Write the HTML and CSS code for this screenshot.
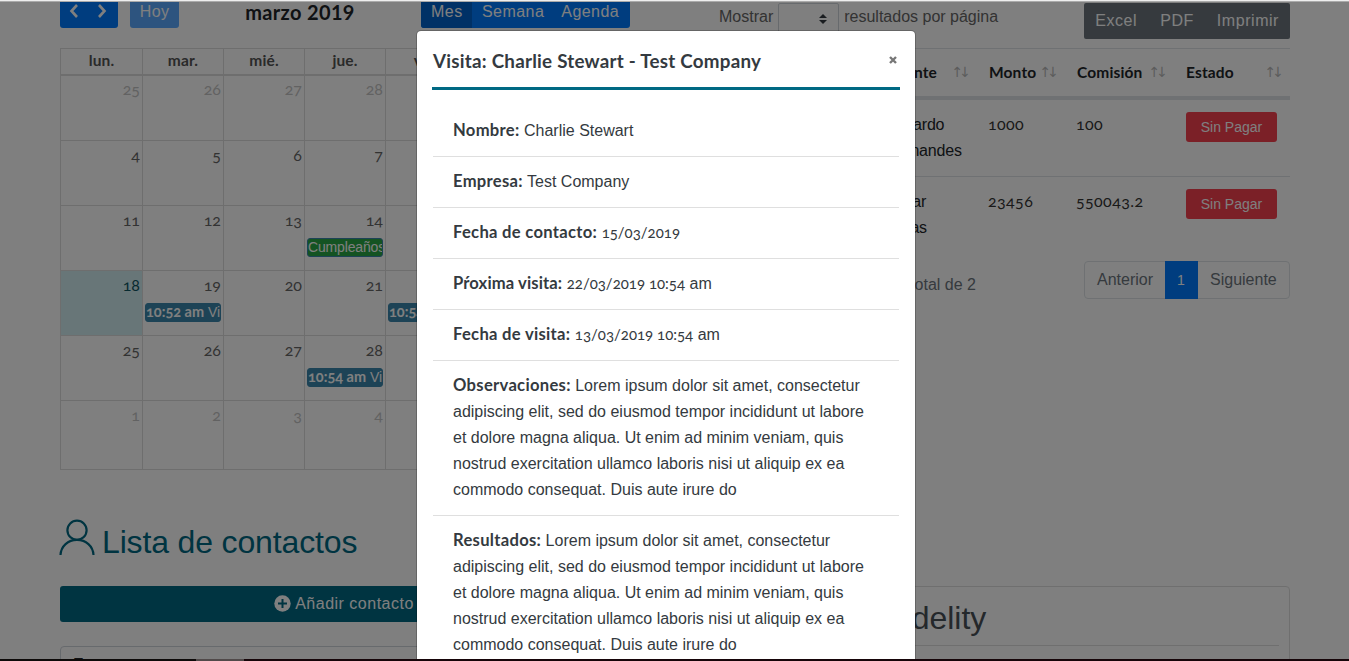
FILE: index.html
```html
<!DOCTYPE html>
<html lang="es">
<head>
<meta charset="utf-8">
<title>Panel de visitas</title>
<link rel="stylesheet" href="styles.css">
</head>
<body>
<div class="page">
  <main class="columns">
    <section class="left">
      <div class="toolbar">
        <div class="nav-group">
          <svg width="12" height="18" viewBox="0 0 12 18"><path d="M9 3 3.5 9 9 15" /></svg>
          <svg width="12" height="18" viewBox="0 0 12 18"><path d="M3 3 8.5 9 3 15" /></svg>
        </div>
        <button class="today-btn">Hoy</button>
        <h2 class="month">marzo 2019</h2>
        <div class="views"><span class="view active">Mes</span><span class="view semana">Semana</span><span class="view">Agenda</span></div>
      </div>
      <div class="calendar">
        <div class="week names"><span>lun.</span><span>mar.</span><span>mié.</span><span>jue.</span><span>vie.</span><span>sáb.</span><span>dom.</span></div>
        <div class="week"><div class="day out">25</div><div class="day out">26</div><div class="day out">27</div><div class="day out">28</div><div class="day"></div><div class="day"></div><div class="day"></div></div>
        <div class="week"><div class="day">4</div><div class="day">5</div><div class="day">6</div><div class="day">7</div><div class="day"></div><div class="day"></div><div class="day"></div></div>
        <div class="week"><div class="day">11</div><div class="day">12</div><div class="day">13</div><div class="day">14<div class="event birthday">Cumpleaños</div></div><div class="day"></div><div class="day"></div><div class="day"></div></div>
        <div class="week"><div class="day now">18</div><div class="day">19<div class="event"><b>10:52 am</b> Visita</div></div><div class="day">20</div><div class="day">21</div><div class="day">22<div class="event"><b>10:54 am</b> Visita</div></div><div class="day"></div><div class="day"></div></div>
        <div class="week"><div class="day">25</div><div class="day">26</div><div class="day">27</div><div class="day">28<div class="event"><b>10:54 am</b> Visita</div></div><div class="day"></div><div class="day"></div><div class="day"></div></div>
        <div class="week last"><div class="day out">1</div><div class="day out">2</div><div class="day out">3</div><div class="day out">4</div><div class="day"></div><div class="day"></div><div class="day"></div></div>
      </div>
      <h1 class="contacts-title">
        <svg width="37" height="37" viewBox="0 0 37 37"><circle cx="18" cy="11.300" r="9.600" /><path d="M1.500 36C2 27 9 20.900 18 20.900S34 27 34.500 36" /></svg>
        <span>Lista de contactos</span>
      </h1>
      <button class="add-btn">
        <svg width="17" height="17" viewBox="0 0 17 17"><circle cx="8.500" cy="8.500" r="8.200" /><path d="M8.500 4v9M4 8.500h9" /></svg>
        <span>Añadir contacto</span>
      </button>
      <div class="contact-table">Empresa</div>
    </section>
    <section class="right">
      <div class="controls">
        <label class="length"><span>Mostrar</span>
          <span class="select"><svg width="8" height="10" viewBox="0 0 8 10"><path d="M4 0 8 4H0zM4 10 0 6h8z" /></svg></span>
          <span>resultados por página</span></label>
        <div class="export"><span>Excel</span><span>PDF</span><span>Imprimir</span></div>
      </div>
      <div class="table">
        <div class="tr th"><span></span><span>Cliente<i>↑↓</i></span><span>Monto<i>↑↓</i></span><span>Comisión<i>↑↓</i></span><span>Estado<i>↑↓</i></span></div>
        <div class="tr"><span></span><span class="client">Gerardo Fernandes</span><span class="num">1000</span><span class="num">100</span><span><button class="unpaid">Sin Pagar</button></span></div>
        <div class="tr"><span></span><span class="client">Omar Rojas</span><span class="num">23456</span><span class="num">550043.2</span><span><button class="unpaid">Sin Pagar</button></span></div>
      </div>
      <div class="footer">
        <span class="info">total de 2</span>
        <div class="pager"><span>Anterior</span><span class="current">1</span><span>Siguiente</span></div>
      </div>
      <div class="card"><h2>Fidelity</h2></div>
    </section>
  </main>
  <div class="backdrop"></div>
  <div class="modal">
    <header class="modal-head"><h4>Visita: Charlie Stewart - Test Company</h4>
      <svg class="close" width="8" height="8" viewBox="0 0 8 8"><path d="M1 1l6 6M7 1 1 7" /></svg></header>
    <ul class="details">
      <li><b>Nombre:</b> Charlie Stewart</li>
      <li><b>Empresa:</b> Test Company</li>
      <li><b>Fecha de contacto:</b> <span class="date">15/03/2019</span></li>
      <li><b class="tight">Pŕoxima visita:</b> <span class="date">22/03/2019 10:54</span> am</li>
      <li><b>Fecha de visita:</b> <span class="date">13/03/2019 10:54</span> am</li>
      <li><b>Observaciones:</b> Lorem ipsum dolor sit amet, consectetur adipiscing elit, sed do eiusmod tempor incididunt ut labore et dolore magna aliqua. Ut enim ad minim veniam, quis nostrud exercitation ullamco laboris nisi ut aliquip ex ea commodo consequat. Duis aute irure do</li>
      <li><b>Resultados:</b> Lorem ipsum dolor sit amet, consectetur adipiscing elit, sed do eiusmod tempor incididunt ut labore et dolore magna aliqua. Ut enim ad minim veniam, quis nostrud exercitation ullamco laboris nisi ut aliquip ex ea commodo consequat. Duis aute irure do</li>
    </ul>
  </div>
  <div class="top-edge"></div>
  <div class="bottom-edge"></div>
</div>
</body>
</html>
```
FILE: styles.css
```css
* { box-sizing: border-box; }
body { margin: 0; font: 16px/26px "Liberation Sans", Arial, sans-serif; color: #212529; }
h1, h2, h4, ul { margin: 0; padding: 0; font-weight: 400; }
button { border: 0; font: inherit; color: #fff; }
.page { position: relative; width: 1349px; height: 661px; overflow: hidden; background: #fff; }
.columns { display: flex; gap: 89px; padding-left: 60px; }
.left { width: 570px; }
.right { width: 571px; }

.toolbar { display: flex; height: 28px; line-height: 24px; color: #fff; }
.nav-group { display: flex; gap: 16px; width: 58px; padding: 2px 9px 2px 8px; background: #007bff; border-radius: 0 0 3px 3px; }
.nav-group svg { fill: none; stroke: #fff; stroke-width: 2.600; }
.today-btn { width: 49px; margin-left: 12px; padding: 0 0 4px; line-height: 24px; letter-spacing: .4px; background: #5aa9ff; border-radius: 0 0 3px 3px; }
.month { width: 242px; text-align: center; font: 700 20px/24px Lato, sans-serif; letter-spacing: .35px; color: #212529; }
.views { display: flex; width: 209px; background: #007bff; border-radius: 0 0 3px 3px; overflow: hidden; letter-spacing: .45px; }
.view { padding: 0 10px; }
.view.active { background: #0062cc; width: 51px; }
.semana { padding-right: 7px; }

.calendar { margin-top: 20px; border: 1px solid #ddd; border-width: 0 1px 1px 0; font-family: Lato, sans-serif; color: #666; }
.week { display: grid; grid-template-columns: 82px 81px 81px 81px 1fr 1fr 1fr; height: 65px; }
.week > * { min-width: 0; border: 1px solid #ddd; border-width: 1px 0 0 1px; }
.names { height: 26px; text-align: center; font-weight: 700; font-size: 15.500px; line-height: 23px; letter-spacing: .15px; color: #555; }
.day { padding: 1px 2px 0; text-align: right; font-size: 16px; font-variant-numeric: oldstyle-nums; }
.names + .week { height: 66px; }
.names + .week .day { border-top-width: 2px; padding-top: 0; }
.last { height: 69px; }
.out { color: #c4c4c4; }
.now { background: #d1ecf1; color: #0c5460; }
.event { height: 19px; margin-top: 5px; padding: 0 1px 0 0; overflow: hidden; white-space: nowrap; text-align: left; font: 14px/17px "Liberation Sans", sans-serif; border: 1px solid #3a87ad; border-radius: 3px; background: #3a87ad; color: #fff; }
.event b { font: 700 14.500px/15px Lato, sans-serif; font-variant-numeric: oldstyle-nums; }
.birthday { background: #28a745; letter-spacing: -.15px; }

.contacts-title { display: flex; gap: 6px; height: 38px; margin-top: 49px; font-size: 32px; line-height: 46px; letter-spacing: -.15px; color: #006983; }
.contacts-title svg { fill: none; stroke: #006983; stroke-width: 2.200; margin-left: -1px; }
.add-btn { display: flex; justify-content: center; align-items: center; gap: 4px; width: 100%; height: 36px; margin-top: 29px; letter-spacing: .5px; background: #006983; border-radius: 3px; }
.add-btn svg { fill: #fff; stroke: #006983; stroke-width: 2; margin: -2px 0 0 -2px; }
.add-btn circle { stroke: none; }
.contact-table { height: 60px; margin-top: 24px; padding: 5px 12px; border: 1px solid #ced4da; border-radius: 4px; }

.controls { display: flex; justify-content: space-between; height: 48px; padding-top: 3px; color: #666; }
.length { display: flex; gap: 5px; line-height: 28px; }
.select { display: flex; justify-content: flex-end; align-items: center; width: 61px; height: 36px; padding: 0 11px 5px; border: 1px solid #ced4da; border-radius: 2px; }
.select svg { fill: #343a40; }
.export { display: flex; gap: 23px; height: 36px; padding: 0 11px; line-height: 35px; letter-spacing: .55px; color: #fff; background: #6c757d; border-radius: 2px; }
.table { height: 205px; }
.tr { display: grid; grid-template-columns: 156px 102px 88px 109px 116px; height: 77px; border-top: 1px solid #dee2e6; }
.tr > span { padding: 12px 12px 0; }
.th { height: 51px; border-bottom: 3px solid #dee2e6; font: 700 15.500px/24px Lato, sans-serif; letter-spacing: .15px; }
.tr.th > span { display: flex; justify-content: space-between; padding: 11px 6px 0 12px; }
.th i { font: 14px/24px "DejaVu Sans", sans-serif; letter-spacing: -4px; padding-right: 4px; color: #b9b9b9; }
.client { letter-spacing: -.2px; }
.tr > .num { padding-left: 11px; font-family: Lato, sans-serif; font-variant-numeric: oldstyle-nums; line-height: 24px; letter-spacing: .4px; color: #333; }
.unpaid { display: block; width: 91px; height: 30px; padding: 0; font-size: 14px; line-height: 30px; background: #f6404f; border-radius: 3px; }
.footer { display: flex; justify-content: flex-end; gap: 108px; margin-top: 8px; height: 38px; color: #6c757d; white-space: nowrap; }
.info { padding-top: 11px; }
.pager { display: flex; width: 206px; line-height: 36px; border: 1px solid #dee2e6; border-radius: 4px; }
.pager span { padding: 0 12px; }
.pager span:last-child { padding-right: 0; }
.pager .current { width: 33px; height: 38px; margin: -1px 0; line-height: 38px; color: #fff; background: #007bff; font-size: 14px; }
.card { height: 120px; margin-top: 287px; padding: 12px 10px; border: 1px solid #dfdfdf; border-radius: 4px; }
.card h2 { height: 47px; padding-left: 155px; line-height: 39px; font-size: 32px; color: #495057; border-bottom: 1px solid #dfdfdf; }

.backdrop { position: absolute; inset: 0; background: rgba(0, 0, 0, .5); }
.modal { position: absolute; left: 416px; top: 30px; width: 500px; height: 700px; padding: 0 15px; background: #fff; background-clip: padding-box; border: 1px solid rgba(0, 0, 0, .2); border-radius: 5px; color: #343a40; }
.modal-head { display: flex; justify-content: space-between; height: 59px; padding: 17px 2px 0 1px; border-bottom: 3px solid #006983; }
.modal-head h4 { font: 700 18.800px/25px Lato, sans-serif; letter-spacing: .24px; white-space: nowrap; }
.close { margin: 8px 1px; stroke: #777; stroke-width: 2.400; }
.details { list-style: none; padding: 16px 1px 0; }
.details li { padding: 12px 20px; border-bottom: 1px solid #dfdfdf; }
.details b { font-family: Lato, sans-serif; font-weight: 700; font-size: 16.600px; line-height: 18px; letter-spacing: .3px; }
.details .tight { letter-spacing: .12px; }
.date { font-family: Lato, sans-serif; font-size: 15px; line-height: 20px; font-variant-numeric: oldstyle-nums; }
.top-edge { position: absolute; inset: 0 0 auto; height: 2px; background: #eee; border-bottom: 1px solid #aaa; }
.bottom-edge { position: absolute; inset: auto 0 0; height: 2px; background: linear-gradient(90deg, #0d0a09 196px, #514a4a 196px 244px, #160509 244px); }
```
